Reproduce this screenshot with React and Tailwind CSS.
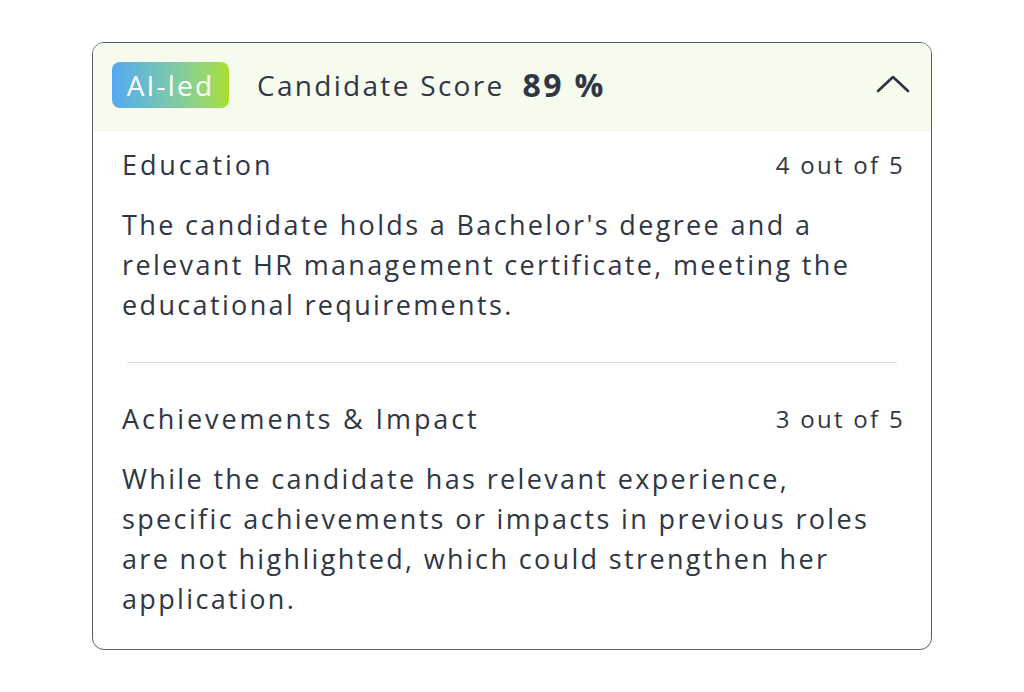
import React from 'react'

const sections = [
    {
        title: 'Education',
        score: '4 out of 5',
        text: "The candidate holds a Bachelor's degree and a relevant HR management certificate, meeting the educational requirements.",
    },
    {
        title: 'Achievements & Impact',
        score: '3 out of 5',
        text: 'While the candidate has relevant experience, specific achievements or impacts in previous roles are not highlighted, which could strengthen her application.',
    },
]

function ChevronUp() {
    return (
        <svg width="36" height="22" viewBox="0 0 36 22" fill="none">
            <path d="M3 18 L18 4 L33 18" stroke="#2d3440" strokeWidth="2.6" strokeLinecap="round" strokeLinejoin="round" />
        </svg>
    )
}

function Section({ section, last }) {
    return (
        <div className={last ? 'pt-[38px]' : 'pb-[37px]'}>
            <div className="flex items-center justify-between h-[36px]">
                <p className="text-[27px] font-medium tracking-[2.9px]">{section.title}</p>
                <p className="text-[24px] tracking-[2.3px] mr-[-3px]">{section.score}</p>
            </div>
            <p className="mt-[22px] text-[27px] leading-[40px] tracking-[2.35px]">{section.text}</p>
        </div>
    )
}

export default function App() {
    return (
        <div className="min-h-[692px] bg-white pt-[42px] text-[#2f3644]" style={{ fontFamily: '"Open Sans", "Noto Sans", sans-serif' }}>
            <div className="mx-auto w-[840px] h-[608px] rounded-[12px] border-[1.5px] border-[#58606b] overflow-hidden">
                <div className="h-[89px] bg-[#f6fbee] flex items-center px-[19px] pb-[5px]">
                    <span className="w-[117px] h-[46px] rounded-[8px] bg-gradient-to-r from-[#55a8f2] to-[#a9df22] text-white text-[28px] tracking-[2.2px] flex items-center justify-center">AI-led</span>
                    <span className="ml-[28px] text-[28px] tracking-[2.3px]">Candidate Score</span>
                    <span className="ml-[18px] text-[32px] font-bold tracking-[2.4px]">89 %</span>
                    <span className="ml-auto mr-[1px] mb-[2px]"><ChevronUp /></span>
                </div>
                <div className="px-[29px] pt-[15px]">
                    <Section section={sections[0]} />
                    <div className="mx-[5px] h-px bg-[#dddddd]" />
                    <Section section={sections[1]} last />
                </div>
            </div>
        </div>
    )
}
